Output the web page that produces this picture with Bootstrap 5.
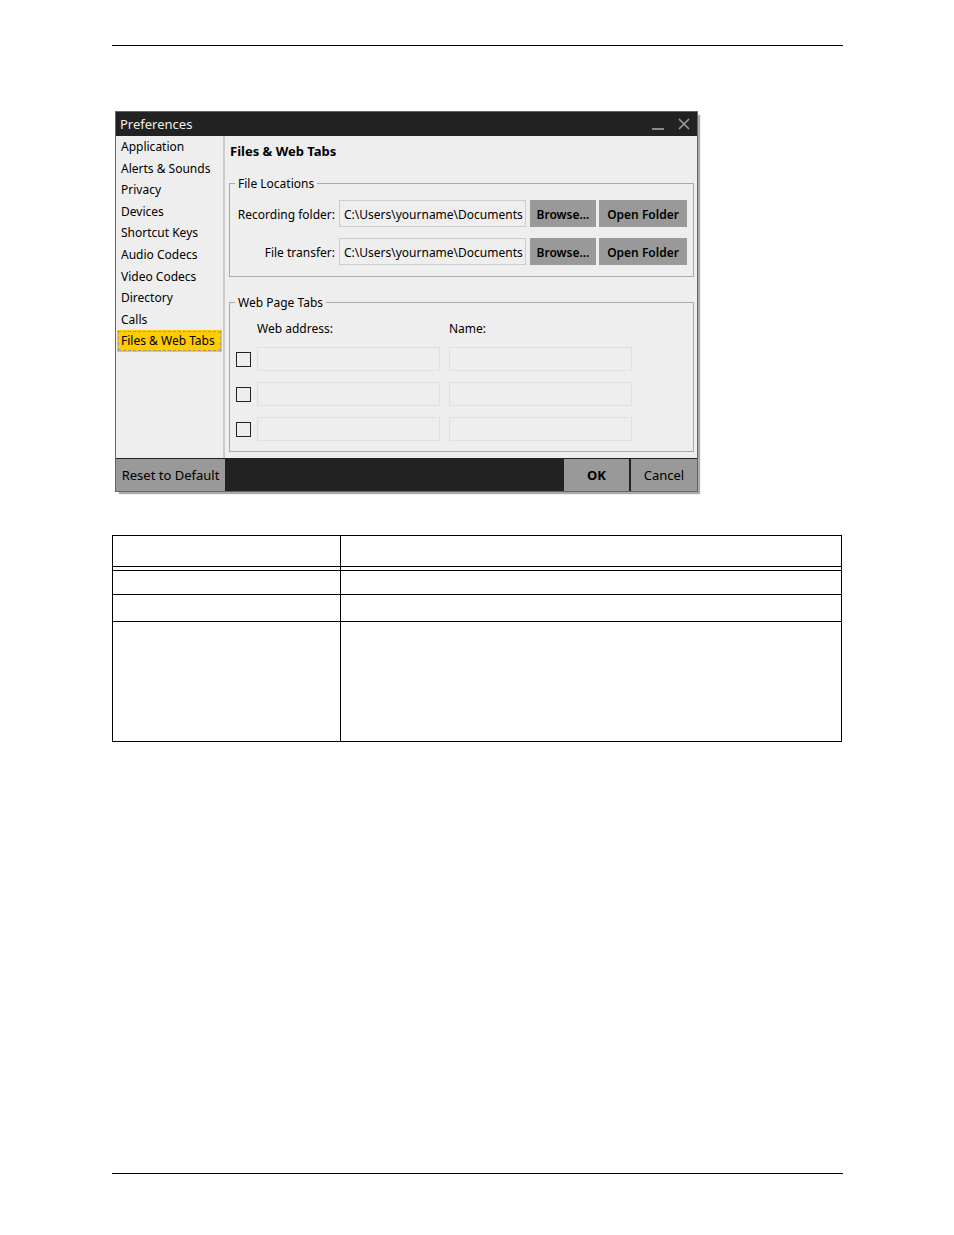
<!DOCTYPE html>
<html lang="en">
<head>
<meta charset="utf-8">
<meta name="viewport" content="width=device-width, initial-scale=1">
<title>Preferences</title>
<link href="https://cdn.jsdelivr.net/npm/bootstrap@5.3.0/dist/css/bootstrap.min.css" rel="stylesheet">
<style>
  body { background: #fff; color: #000; }
  .sheet { padding: 45px 111px 61px 112px; }
  .rule { border: 0; border-top: 1px solid #000; opacity: 1; margin: 0; }
  .pref-window {
    width: 100%; max-width: 583px; margin: 65px 0 0 3px;
    border: 1px solid #666; background: #eee;
    box-shadow: 3px 3px 1px -1px #aaa;
    font: 12px/20px "Noto Sans", "Open Sans", sans-serif;
  }
  .pref-title { height: 24px; background: #222; color: #eee; padding: 0 6px 0 4px; font-size: 13px; }
  .win-btns { gap: 12px; }
  .win-btn { border: 0; background: none; padding: 0; width: 14px; height: 14px; display: flex; }
  .pref-main { height: 322px; }
  .pref-side { width: 109px; border-right: 2px solid #ccc; }
  .pref-list { height: 216px; }
  .pref-list a { color: #000; text-decoration: none; margin: 0 1px; padding: 1px 4px 0; line-height: 20px; white-space: nowrap; }
  .pref-list a.active { background: #fc0; outline: 1px dashed #999; outline-offset: -2px; }
  .pref-pane { padding: 5px 3px 0 4px; }
  .pref-pane h1 { font-size: 13px; line-height: 20px; font-weight: 700; margin: 0 0 12px 1px; }
  .group-box { border: 1px solid #aaa; padding: 0 6px; }
  .group-box legend { float: none; width: auto; font-size: 12px; line-height: 20px; margin: 0 0 0 -1px; padding: 1px 3px 0; height: 20px; }
  .loc-box { height: 104px; margin-bottom: 15px; }
  .loc-row { height: 27px; margin-top: 7px; }
  .loc-row + .loc-row { margin-top: 11px; }
  .loc-row label { width: 100px; text-align: right; white-space: nowrap; padding: 2px 1px 0 0; margin-right: 3px; }
  .edit { background: transparent; border: 1px solid #ccc; border-radius: 0; color: #000; min-width: 0; padding: 2px 0 0 4px; font-size: 12px; }
  .loc-row .edit { margin-right: 4px; height: 27px; }
  .flat-btn { border: 0; background: #999; color: #000; padding: 0; white-space: nowrap; }
  .loc-row .flat-btn { height: 27px; font-weight: 600; padding-top: 2px; }
  .browse { width: 66px; margin-right: 3px; }
  .open { width: 88px; }
  .web-box { height: 160px; }
  .web-grid { display: grid; grid-template-columns: 21px 192px 183px; row-gap: 11px; align-items: center; padding-top: 6px; }
  .web-grid span { line-height: 20px; padding-top: 1px; height: 18px; }
  .web-grid .edit { border-color: #e0e0e0; height: 24px; width: 183px; }
  .tick { appearance: none; width: 15px; height: 15px; border: 1px solid #222; margin: 0; }
  .tick:checked { background: #222; }
  .pref-foot { height: 33px; background: #222; padding-top: 1px; font-size: 13px; }
  .reset { width: 109px; }
  .confirm { width: 65px; }
  .dismiss { width: 66px; margin-left: 2px; }
  .grid-table { margin: 43px 0 0; border-collapse: collapse; width: calc(100% - 1px); table-layout: fixed; }
  .grid-table th, .grid-table td { border: 1px solid #000; padding: 0; }
  .grid-table .first-col { width: 228px; }
  .h-head { height: 31px; } .h-gap { height: 4px; } .h-a { height: 24px; } .h-b { height: 27px; } .h-c { height: 120px; }
</style>
</head>
<body>
<div class="sheet min-vh-100 d-flex flex-column">
  <hr class="rule">
  <section class="pref-window" aria-label="Preferences">
    <header class="pref-title d-flex align-items-center justify-content-between">
      <span>Preferences</span>
      <div class="win-btns d-flex">
        <button class="win-btn" type="button" aria-label="Minimize"><svg width="14" height="14" viewBox="0 0 14 14"><path d="M1 12h12" stroke="#888" stroke-width="2"/></svg></button>
        <button class="win-btn" type="button" aria-label="Close"><svg width="14" height="14" viewBox="0 0 14 14"><path d="M2 2l10 10M12 2L2 12" stroke="#999" stroke-width="1.7"/></svg></button>
      </div>
    </header>
    <div class="pref-main d-flex">
      <nav class="pref-side flex-shrink-0">
        <div class="pref-list d-flex flex-column">
          <a class="flex-fill" href="#">Application</a>
          <a class="flex-fill" href="#">Alerts &amp; Sounds</a>
          <a class="flex-fill" href="#">Privacy</a>
          <a class="flex-fill" href="#">Devices</a>
          <a class="flex-fill" href="#">Shortcut Keys</a>
          <a class="flex-fill" href="#">Audio Codecs</a>
          <a class="flex-fill" href="#">Video Codecs</a>
          <a class="flex-fill" href="#">Directory</a>
          <a class="flex-fill" href="#">Calls</a>
          <a class="flex-fill active" href="#">Files &amp; Web Tabs</a>
        </div>
      </nav>
      <form class="pref-pane flex-grow-1">
        <h1>Files &amp; Web Tabs</h1>
        <fieldset class="group-box loc-box">
          <legend>File Locations</legend>
          <div class="loc-row d-flex align-items-center">
            <label for="rec">Recording folder:</label>
            <input id="rec" class="edit flex-grow-1" type="text" value="C:\Users\yourname\Documents">
            <button class="flat-btn browse" type="button">Browse...</button>
            <button class="flat-btn open" type="button">Open Folder</button>
          </div>
          <div class="loc-row d-flex align-items-center">
            <label for="xfer">File transfer:</label>
            <input id="xfer" class="edit flex-grow-1" type="text" value="C:\Users\yourname\Documents">
            <button class="flat-btn browse" type="button">Browse...</button>
            <button class="flat-btn open" type="button">Open Folder</button>
          </div>
        </fieldset>
        <fieldset class="group-box web-box">
          <legend>Web Page Tabs</legend>
          <div class="web-grid">
            <span></span><span id="wa">Web address:</span><span id="wn">Name:</span>
            <input class="tick" type="checkbox" aria-label="Tab 1"><input class="edit" type="text" aria-labelledby="wa"><input class="edit" type="text" aria-labelledby="wn">
            <input class="tick" type="checkbox" aria-label="Tab 2"><input class="edit" type="text" aria-labelledby="wa"><input class="edit" type="text" aria-labelledby="wn">
            <input class="tick" type="checkbox" aria-label="Tab 3"><input class="edit" type="text" aria-labelledby="wa"><input class="edit" type="text" aria-labelledby="wn">
          </div>
        </fieldset>
      </form>
    </div>
    <footer class="pref-foot d-flex">
      <button class="flat-btn reset" type="button">Reset to Default</button>
      <button class="flat-btn confirm fw-bold ms-auto" type="button">OK</button>
      <button class="flat-btn dismiss" type="button">Cancel</button>
    </footer>
  </section>
  <table class="grid-table">
    <thead><tr class="h-head"><th class="first-col"></th><th></th></tr></thead>
    <tbody>
      <tr class="h-gap"><td></td><td></td></tr>
      <tr class="h-a"><td></td><td></td></tr>
      <tr class="h-b"><td></td><td></td></tr>
      <tr class="h-c"><td></td><td></td></tr>
    </tbody>
  </table>
  <hr class="rule mt-auto">
</div>
<script src="https://cdn.jsdelivr.net/npm/bootstrap@5.3.0/dist/js/bootstrap.bundle.min.js"></script>
</body>
</html>
